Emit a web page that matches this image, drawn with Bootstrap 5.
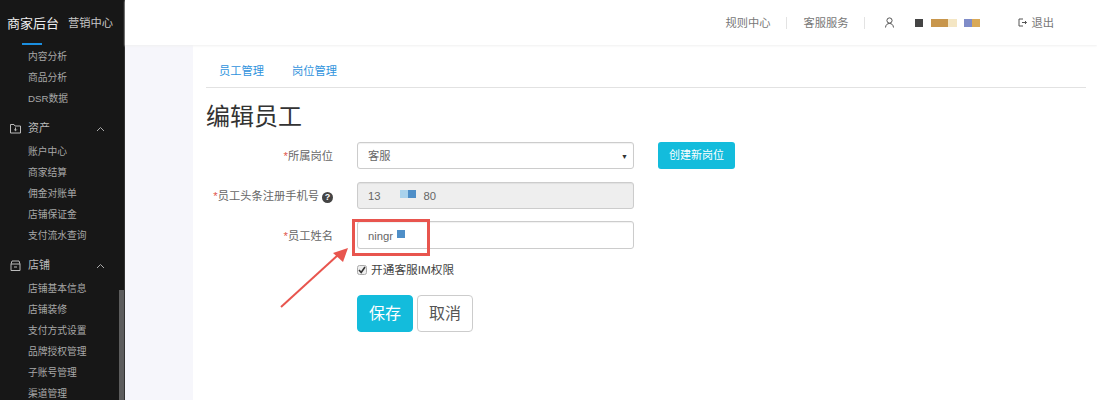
<!DOCTYPE html>
<html lang="zh">
<head>
<meta charset="utf-8">
<title>编辑员工</title>
<link href="https://cdn.jsdelivr.net/npm/bootstrap@5.3.0/dist/css/bootstrap.min.css" rel="stylesheet">
<style>
html,body{height:400px;overflow:hidden}
body{font-family:"Liberation Sans","Noto Sans CJK SC",sans-serif;font-size:11.25px;color:#666;background:#fff;width:1097px}
.shell{height:400px}
.side{width:125px;flex:none;background:#171717;height:400px;overflow:hidden;position:relative;border-right:1px solid #333}
.side-top{height:46px;padding-left:7px;padding-top:1px;gap:9px;color:#c8c8c8;font-size:11.25px;position:relative}
.side-top b{font-weight:400;font-size:13px;color:#eee}
.side-top::after{content:"";position:absolute;left:22px;top:43px;width:20px;height:2px;background:#1b8fe0}
.side-link{height:21px;line-height:21px;padding-left:28px;font-size:9.75px;color:#a8a8a8}
.side-head{height:21px;padding-left:10px;padding-right:19px;padding-top:2px;font-size:11px;color:#bbb;margin-top:8px;margin-bottom:3px}
.side-head span{margin-left:7px;flex:1}
.side-thumb{position:absolute;left:119px;top:290px;width:5px;height:110px;background:#5d5d5d}
.pane{flex:1;min-width:0}
.top{height:45px;padding-right:43px;box-shadow:0 1px 2px #f0f0f0;position:relative;color:#777}
.top-txt{padding-top:2px}
.top-sep{width:1px;height:12px;background:#e3e3e3;margin:0 16px}
.blk{display:inline-block;height:8px}
.below{height:355px}
.strip{width:68px;flex:none;background:#f6f6fb}
.work{flex:1;padding-left:13px;padding-right:11px;position:relative}
.tabs-row{height:43px;padding-left:13px;gap:28px;border-bottom:1px solid #e2e2e2;padding-top:10px}
.tabs-row a{color:#2f93dd;text-decoration:none;font-size:11.25px}
.title{font-size:24px;font-weight:400;color:#333;margin:0;line-height:29px;padding-top:14px;height:54px}
.frow{display:flex;align-items:center;height:27px;margin-bottom:13px}
.frow.tall{height:28px;margin-top:-1px;margin-bottom:13px}
.lbl{width:127px;text-align:right;font-size:11.25px;color:#666;margin-right:24px;white-space:nowrap;padding-top:2px}
.lbl i{color:#e0534a;font-style:normal}
.ctl{width:277px;height:100%;border:1px solid #ccc;border-radius:3px;background:#fff;padding:2px 10px 0;font-size:11.25px;color:#666;box-shadow:inset 0 1px 1px rgba(0,0,0,.06);display:flex;align-items:center;position:relative}
.ctl.off{background:#eee}
.caret{position:absolute;right:5px;top:10px;font-size:7px;color:#333;line-height:7px}
.new-btn{margin-left:24px;width:77px;height:27px;background:#13bcdc;border:0;border-radius:3px;color:#fff;font-size:11px;padding:0}
.qm{display:inline-block;width:11px;height:11px;border-radius:50%;background:#444;color:#fff;font-size:9px;line-height:11px;text-align:center;font-weight:700;margin-left:3px;vertical-align:0}
.chk-row{margin-left:151px;height:16px;margin-top:1px;gap:4px;color:#444;font-size:11.7px}
.gap-a{margin-left:19px}
.act{margin-left:151px;margin-top:17px;gap:4px}
.btn-save,.btn-cancel{height:37px;width:56px;font-size:16px;border-radius:4px;padding:1px 0 0}
.btn-save{background:#13bcdc;border:1px solid #13bcdc;color:#fff}
.btn-cancel{background:#fff;border:1px solid #ccc;color:#555}
.mark-box{position:absolute;left:159px;top:174px;width:78px;height:37px;border:3px solid #e8554e}
.mark-arrow{position:absolute;left:80px;top:190px}
</style>
</head>
<body>
<div class="shell d-flex">
  <aside class="side">
    <div class="side-top d-flex align-items-center"><b>商家后台</b><span>营销中心</span></div>
    <div class="side-link">内容分析</div>
    <div class="side-link">商品分析</div>
    <div class="side-link">DSR数据</div>
    <div class="side-head d-flex align-items-center">
      <svg width="11" height="11" viewBox="0 0 11 11" fill="none" stroke="#bbb"><path d="M.5 10V1.500h3.500l1 1.500h5.500v7z"/><path d="M5.500 4.500v3M4.200 6.500l1.300 1.300 1.300-1.300"/></svg>
      <span>资产</span>
      <svg width="9" height="6" viewBox="0 0 9 6" fill="none" stroke="#aaa"><path d="M1 5l3.500-3.500L8 5"/></svg>
    </div>
    <div class="side-link">账户中心</div>
    <div class="side-link">商家结算</div>
    <div class="side-link">佣金对账单</div>
    <div class="side-link">店铺保证金</div>
    <div class="side-link">支付流水查询</div>
    <div class="side-head d-flex align-items-center">
      <svg width="11" height="11" viewBox="0 0 11 11" fill="none" stroke="#bbb"><path d="M1 4l1-3h7l1 3v6.500H1zM1 4h9M4 7h3"/></svg>
      <span>店铺</span>
      <svg width="9" height="6" viewBox="0 0 9 6" fill="none" stroke="#aaa"><path d="M1 5l3.500-3.500L8 5"/></svg>
    </div>
    <div class="side-link">店铺基本信息</div>
    <div class="side-link">店铺装修</div>
    <div class="side-link">支付方式设置</div>
    <div class="side-link">品牌授权管理</div>
    <div class="side-link">子账号管理</div>
    <div class="side-link">渠道管理</div>
    <div class="side-thumb"></div>
  </aside>
  <div class="pane">
    <header class="top d-flex align-items-center justify-content-end">
      <span class="top-txt">规则中心</span><span class="top-sep"></span><span class="top-txt">客服服务</span><span class="top-sep"></span>
      <svg style="margin-left:3px" width="11" height="11" viewBox="0 0 11 11" fill="none" stroke="#555"><circle cx="5.500" cy="3.500" r="2.600"/><path d="M1.500 10.500c.3-2.800 1.800-4 4-4s3.700 1.200 4 4"/></svg>
      <span class="blk" style="width:8px;background:#444;margin-left:20px"></span>
      <span class="blk" style="width:17px;background:#c8964c;margin-left:8px"></span>
      <span class="blk" style="width:9px;background:#f4e6c4"></span>
      <span class="blk" style="width:8px;background:#7f8cc8;margin-left:7px"></span>
      <span class="blk" style="width:8px;background:#d9a957"></span>
      <svg style="margin-left:38px" width="9" height="9" viewBox="0 0 9 9" fill="none" stroke="#555"><path d="M5 1H1v7h4M4 4.500h4.500M7 3l1.500 1.500L7 6"/></svg>
      <span class="ms-1 top-txt">退出</span>
    </header>
    <div class="below d-flex">
      <div class="strip"></div>
      <main class="work">
        <nav class="tabs-row d-flex align-items-center"><a href="#">员工管理</a><a href="#">岗位管理</a></nav>
        <h1 class="title">编辑员工</h1>
        <div class="frow">
          <div class="lbl"><i>*</i>所属岗位</div>
          <div class="ctl">客服<span class="caret">▼</span></div>
          <button class="new-btn btn" type="button">创建新岗位</button>
        </div>
        <div class="frow">
          <div class="lbl"><i>*</i>员工头条注册手机号<span class="qm">?</span></div>
          <div class="ctl off">13<span class="blk gap-a" style="width:8px;background:#a9d2ec;margin-top:-6px"></span><span class="blk" style="width:8px;background:#4f8fc8;margin-top:-6px"></span><span class="ms-2">80</span></div>
        </div>
        <div class="frow tall">
          <div class="lbl"><i>*</i>员工姓名</div>
          <div class="ctl">ningr<span class="blk ms-1" style="width:8px;background:#4f8fc8;margin-top:-5px"></span></div>
        </div>
        <div class="chk-row d-flex align-items-center">
          <svg width="10" height="10" viewBox="0 0 10 10"><rect x=".5" y=".5" width="9" height="9" rx="2" fill="#eee" stroke="#aaa"/><path d="M2 5l2.200 2.500L8 2" fill="none" stroke="#333" stroke-width="1.600"/></svg>
          <span>开通客服IM权限</span>
        </div>
        <div class="act d-flex">
          <button class="btn btn-save" type="button">保存</button>
          <button class="btn btn-cancel" type="button">取消</button>
        </div>
        <div class="mark-box"></div>
        <svg class="mark-arrow" width="85" height="75" viewBox="0 0 85 75"><path d="M8 72 65 20" stroke="#e8554e" stroke-width="2" fill="none"/><path d="M75 13 60 18 70 27z" fill="#e8554e"/></svg>
      </main>
    </div>
  </div>
</div>
</body>
</html>
